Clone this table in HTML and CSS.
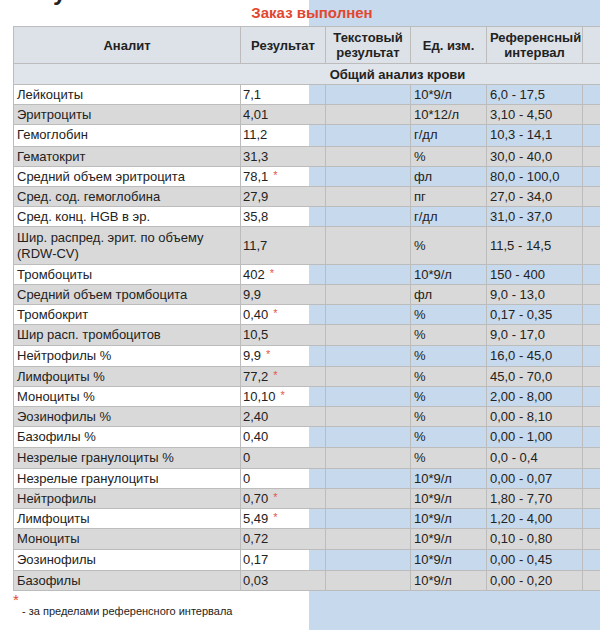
FILE: index.html
```html
<!DOCTYPE html>
<html lang="ru">
<head>
<meta charset="utf-8">
<title>Заказ выполнен</title>
<link rel="stylesheet" href="styles.css">
</head>
<body>
<h1 class="page-title">Результаты</h1>
<div class="status">Заказ выполнен</div>
<table class="results">
  <colgroup>
    <col class="c-name"><col class="c-res"><col class="c-text"><col class="c-unit"><col class="c-ref"><col class="c-extra">
  </colgroup>
  <thead>
    <tr class="head">
      <th>Аналит</th>
      <th>Результат</th>
      <th>Текстовый<br>результат</th>
      <th>Ед. изм.</th>
      <th>Референсный<br>интервал</th>
      <th></th>
    </tr>
    <tr class="section">
      <th colspan="6">Общий анализ крови</th>
    </tr>
  </thead>
  <tbody>
    <tr><td>Лейкоциты</td><td>7,1</td><td></td><td>10*9/л</td><td>6,0 - 17,5</td><td></td></tr>
    <tr><td>Эритроциты</td><td>4,01</td><td></td><td>10*12/л</td><td>3,10 - 4,50</td><td></td></tr>
    <tr><td>Гемоглобин</td><td>11,2</td><td></td><td>г/дл</td><td>10,3 - 14,1</td><td></td></tr>
    <tr><td>Гематокрит</td><td>31,3</td><td></td><td>%</td><td>30,0 - 40,0</td><td></td></tr>
    <tr><td>Средний объем эритроцита</td><td>78,1<span class="flag">*</span></td><td></td><td>фл</td><td>80,0 - 100,0</td><td></td></tr>
    <tr><td>Сред. сод. гемоглобина</td><td>27,9</td><td></td><td>пг</td><td>27,0 - 34,0</td><td></td></tr>
    <tr><td>Сред. конц. HGB в эр.</td><td>35,8</td><td></td><td>г/дл</td><td>31,0 - 37,0</td><td></td></tr>
    <tr class="tall"><td>Шир. распред. эрит. по объему (RDW-CV)</td><td>11,7</td><td></td><td>%</td><td>11,5 - 14,5</td><td></td></tr>
    <tr><td>Тромбоциты</td><td>402<span class="flag">*</span></td><td></td><td>10*9/л</td><td>150 - 400</td><td></td></tr>
    <tr><td>Средний объем тромбоцита</td><td>9,9</td><td></td><td>фл</td><td>9,0 - 13,0</td><td></td></tr>
    <tr><td>Тромбокрит</td><td>0,40<span class="flag">*</span></td><td></td><td>%</td><td>0,17 - 0,35</td><td></td></tr>
    <tr><td>Шир расп. тромбоцитов</td><td>10,5</td><td></td><td>%</td><td>9,0 - 17,0</td><td></td></tr>
    <tr><td>Нейтрофилы %</td><td>9,9<span class="flag">*</span></td><td></td><td>%</td><td>16,0 - 45,0</td><td></td></tr>
    <tr><td>Лимфоциты %</td><td>77,2<span class="flag">*</span></td><td></td><td>%</td><td>45,0 - 70,0</td><td></td></tr>
    <tr><td>Моноциты %</td><td>10,10<span class="flag">*</span></td><td></td><td>%</td><td>2,00 - 8,00</td><td></td></tr>
    <tr><td>Эозинофилы %</td><td>2,40</td><td></td><td>%</td><td>0,00 - 8,10</td><td></td></tr>
    <tr><td>Базофилы %</td><td>0,40</td><td></td><td>%</td><td>0,00 - 1,00</td><td></td></tr>
    <tr><td>Незрелые гранулоциты %</td><td>0</td><td></td><td>%</td><td>0,0 - 0,4</td><td></td></tr>
    <tr><td>Незрелые гранулоциты</td><td>0</td><td></td><td>10*9/л</td><td>0,00 - 0,07</td><td></td></tr>
    <tr><td>Нейтрофилы</td><td>0,70<span class="flag">*</span></td><td></td><td>10*9/л</td><td>1,80 - 7,70</td><td></td></tr>
    <tr><td>Лимфоциты</td><td>5,49<span class="flag">*</span></td><td></td><td>10*9/л</td><td>1,20 - 4,00</td><td></td></tr>
    <tr><td>Моноциты</td><td>0,72</td><td></td><td>10*9/л</td><td>0,10 - 0,80</td><td></td></tr>
    <tr><td>Эозинофилы</td><td>0,17</td><td></td><td>10*9/л</td><td>0,00 - 0,45</td><td></td></tr>
    <tr><td>Базофилы</td><td>0,03</td><td></td><td>10*9/л</td><td>0,00 - 0,20</td><td></td></tr>
  </tbody>
</table>
<div class="note">
  <span class="note-star">*</span>
  <span class="note-text">- за пределами референсного интервала</span>
</div>
</body>
</html>
```
FILE: styles.css
```css
html, body {
  overflow: hidden;
}
body {
  margin: 0;
  width: 600px;
  height: 630px;
  font-family: "Liberation Sans", Arial, sans-serif;
  color: #222;
  background: linear-gradient(to right, #ffffff 0, #ffffff 309px, #c6d9ed 309px, #c6d9ed 100%);
}
.page-title {
  margin: -22px 0 0 13px;
  font-size: 24px;
  line-height: 28px;
  font-weight: bold;
  color: #222;
}
.status {
  margin-top: -2px;
  padding-left: 24px;
  text-align: center;
  font-size: 15px;
  line-height: 18px;
  font-weight: bold;
  color: #e2472f;
}
.results {
  margin: 4px 0 0 13px;
  width: 768px;
  border-collapse: collapse;
  table-layout: fixed;
  font-size: 13px;
  line-height: 15px;
}
.c-name { width: 227px; }
.c-res { width: 85px; }
.c-text { width: 85px; }
.c-unit { width: 76px; }
.c-ref { width: 96px; }
.c-extra { width: 199px; }
.results th,
.results td {
  border: 1px solid #bcbcbc;
  padding: 2px 3px;
  text-align: left;
  vertical-align: middle;
}
.results td {
  line-height: 15.2px;
}
.results .head th {
  background: #dde2e9;
  text-align: center;
  font-weight: bold;
  padding: 3px 3px;
  color: #222;
}
.results .section th {
  background: #e0e4eb;
  text-align: center;
  font-weight: bold;
  padding: 2.5px 3px;
}
.results tbody tr:nth-child(even) td {
  background: #d9d9d9;
}
.results tbody tr:nth-child(5n+3) td {
  padding-bottom: 3px;
}
.results tbody tr.tall td {
  padding-top: 3px;
}
.results td:first-child {
  padding-left: 3px;
}
.results td:nth-child(2) {
  padding-left: 2px;
}
.flag {
  color: #e2574c;
  font-size: 11px;
  line-height: 10px;
  margin-left: 5px;
  position: relative;
  top: -2px;
}
.note {
  margin: 4px 0 0 13px;
  display: flex;
  flex-direction: column;
}
.note-star {
  color: #e2472f;
  font-size: 15px;
  line-height: 10px;
  height: 10px;
}
.note-text {
  padding-left: 9px;
  font-size: 11px;
  line-height: 13px;
  color: #222;
}
```
